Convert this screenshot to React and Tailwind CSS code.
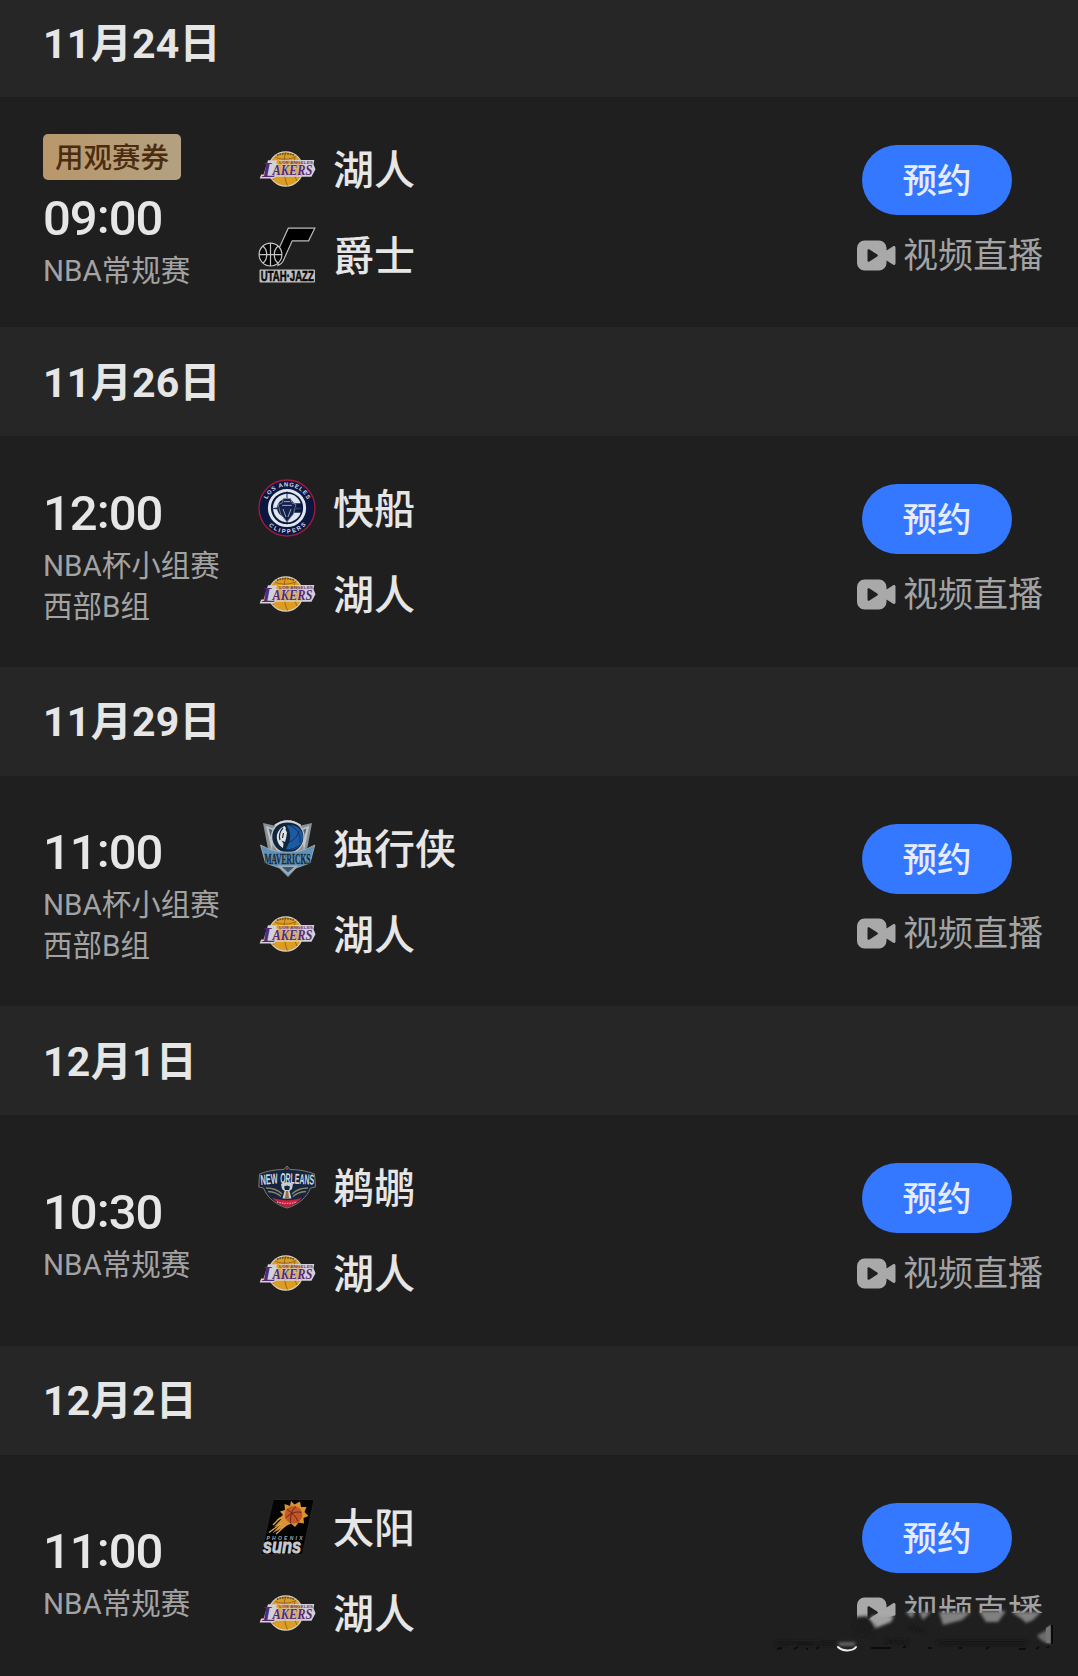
import React from 'react';

const LakersLogo = () => (
    <svg viewBox="0 0 58 58" className="w-[58px] h-[58px] shrink-0">
        <circle cx="27.7" cy="29" r="17.8" fill="#d8d2c4" />
        <circle cx="27.7" cy="29" r="16.6" fill="#dd9d22" />
        <g fill="none" stroke="#7a5320" strokeWidth="0.7">
            <path d="M27.7 12.4C25 20 25 37 29.5 45.5" />
            <path d="M17 17c5 3 16 3 21.5-1M15 40c3-9 3-12 1-20M39 41c-3-6-4-12-2-24" />
        </g>
        <path d="M19 15.5c5-2.6 12-2.6 17.5 0" fill="none" stroke="#6a4a1c" strokeWidth="1.6" strokeDasharray="1.8 0.8" />
        <path d="M10 20.3h9.5l-1.6 3.2h3V20H56.3l-.8 4.2 2 5-4 7.6H17.5l-1.6 1.6H1.6l1.6-4h2.4z" fill="#d3d0d6" />
        <path d="M20 20.8h16a17 17 0 0 1 8.3 2.7H19z" fill="#dd9d22" />
        <path d="M20 24h24.300v11.800H18z" fill="#dd9d22" fillOpacity="0.75" />
        <text x="4" y="37" fontSize="21" fontWeight="700" fontStyle="italic" fill="#542a78" textLength="14" lengthAdjust="spacingAndGlyphs" className="font-['Liberation_Serif',serif]">L</text>
        <text x="14.5" y="35" fontSize="15.5" fontWeight="700" fontStyle="italic" fill="#542a78" stroke="#d3d0d6" strokeWidth="0.9" paintOrder="stroke" textLength="40" lengthAdjust="spacingAndGlyphs" className="font-['Liberation_Serif',serif]">AKERS</text>
        <text x="21" y="23.6" fontSize="4" fontWeight="700" fill="#6d4a80" textLength="34" lengthAdjust="spacingAndGlyphs" className="font-['Liberation_Sans',sans-serif]">LOS ANGELES</text>
    </svg>
);

const JazzLogo = () => (
    <svg viewBox="0 0 58 58" className="w-[58px] h-[58px] shrink-0">
        <path d="M30.3 2.2h26.5l-6.2 12.6H34.2L25 35.2c-1 2-3 3.5-5 4.3l1-17.2z" fill="#000" stroke="#bdbdbd" strokeWidth="1.2" />
        <circle cx="12.5" cy="28.6" r="11.4" fill="#050505" stroke="#c6c6c6" strokeWidth="1.2" />
        <path d="M12.5 17.2V40M1.1 28.6h22.8M5 20.2c5 4 5 13 0 16.8M20 20.2c-5 4-5 13 0 16.8" fill="none" stroke="#c6c6c6" strokeWidth="1.2" />
        <rect x="1.5" y="43.6" width="55.5" height="12.8" rx="1" fill="#bdbdbd" />
        <text x="2.8" y="55" fontSize="14" fontWeight="700" fill="#050505" stroke="#050505" strokeWidth="0.5" textLength="53" lengthAdjust="spacingAndGlyphs" className="font-['Liberation_Sans',sans-serif]">UTAH·JAZZ</text>
    </svg>
);

const ClippersLogo = () => (
    <svg viewBox="0 0 58 58" className="w-[58px] h-[58px] shrink-0">
        <defs>
            <path id="clippers-top" d="M7.3 29a21.7 21.7 0 0 1 43.4 0" />
            <path id="clippers-bottom" d="M3.6 29a25.4 25.4 0 0 0 50.8 0" />
        </defs>
        <circle cx="29" cy="29" r="28" fill="#0c1740" stroke="#a5193f" strokeWidth="1.3" />
        <circle cx="29" cy="29" r="17.6" fill="#0c1740" stroke="#dfe6ee" strokeWidth="3" />
        <path d="M42.8 24.2a14.3 14.3 0 1 0 0 9.6h-6.6a9.2 9.2 0 1 1 0-9.6z" fill="#dfe6ee" />
        <path d="M29 12.5v33" stroke="#0c1740" strokeWidth="0.9" />
        <path d="M25.3 19.5h7.4l1.3 4.5 4 1.5-2.6 9.5L29 43l-6.4-8L20 25.5l4-1.5z" fill="#14214c" stroke="#8791ab" strokeWidth="0.8" />
        <path d="M24.2 26.4h9.6M25.8 22.6h6.4M25 30l3 8M33 30l-3 8" fill="none" stroke="#9aa6bc" strokeWidth="1" />
        <path d="M12.5 29.4l8.5-1.4v2.8zM45.5 29.4L37 28v2.8z" fill="#2a3760" />
        <g fontSize="5.8" fontWeight="700" fill="#d8dde8" className="font-['Liberation_Sans',sans-serif]">
            <text>
                <textPath href="#clippers-top" startOffset="9" textLength="50">LOS ANGELES</textPath>
            </text>
            <text>
                <textPath href="#clippers-bottom" startOffset="19" textLength="42">CLIPPERS</textPath>
            </text>
        </g>
    </svg>
);

const MavericksLogo = () => (
    <svg viewBox="0 0 58 58" className="w-[58px] h-[58px] shrink-0">
        <path d="M5 4l11 2.5C24-.5 35-.5 43 6.5L54 4l-4.5 24L30 57.5 10 30z" fill="#8c9196" />
        <path d="M8 7l8 3-2 22zM51 7l-8 3 3 22z" fill="#c2c6c9" />
        <path d="M10.5 9.5l4 1.5.5 14zM48.5 9.5l-4 1.5 0 14z" fill="#59626b" />
        <circle cx="29.8" cy="18" r="16.2" fill="#11253c" stroke="#bfc5ca" strokeWidth="1.3" />
        <path d="M17 6.5c7-5.5 18-5.5 25.5 0" fill="none" stroke="#d2d6d9" strokeWidth="2" />
        <circle cx="32.5" cy="18.5" r="12.4" fill="#1c5ba4" />
        <path d="M31 6c8 3 12 9 11 18M28 24c6-1 11-5 13-12M28 31c5 0 10-2 14-5" fill="none" stroke="#0e2d55" strokeWidth="0.9" />
        <path d="M27.5 5.5c5 5 6 13 3 19.5l-3 6-9-4c-3-8 0-17 9-21.5z" fill="#11253c" />
        <path d="M26.5 7c-5 2-8.5 7.5-7.5 13 .5 4.5 3 7 6 9l.5-4.5-2-3 3.5 1.5 1-3.5 1-6-1.5-3 .5-1.5z" fill="#dfe3e6" />
        <path d="M25 9c-3 3-4.500 8-3 12M25.5 14l-1 5" fill="none" stroke="#15283c" strokeWidth="1.2" />
        <path d="M2.5 26l9.5 4.5c11 3.5 24 3.5 35.5 0L56.8 26 52 44l-14 5-8 8.5L21.5 49 7.5 44z" fill="#5f92b8" stroke="#a9b2b9" strokeWidth="0.8" />
        <path d="M19 46.5h21.5L30 56z" fill="#a5abb0" />
        <path d="M24 48h12l-6 5.5z" fill="#315a7d" />
        <text x="6.5" y="44.500" fontSize="14" fontWeight="700" fill="#182a3b" stroke="#182a3b" strokeWidth="0.3" textLength="46" lengthAdjust="spacingAndGlyphs" className="font-['Liberation_Serif',serif]">MAVERICKS</text>
    </svg>
);

const PelicansLogo = () => (
    <svg viewBox="0 0 58 58" className="w-[58px] h-[58px] shrink-0">
        <path d="M29 8l3 3.5c9 0 17 1.5 24.5 4.5L57.5 29l-5 1C49 39 41 46.5 29 50 17 46.5 9 39 5.5 30L.8 29 1.500 16C9 13 17 11.500 26 11.5z" fill="#132540" stroke="#8d8468" strokeWidth="0.9" />
        <path d="M29 8.800l1.5 2.7h-3z" fill="#a54042" />
        <path d="M8 30c7 0 12 2 16 6M10 33.5c6 .5 10 2 13 5M50 30c-7 0-12 2-16 6M48 33.5c-6 .5-10 2-13 5" fill="none" stroke="#918461" strokeWidth="1.4" />
        <path d="M14 39.5c9 3.5 21 3.5 30 0-4 5-9 8-15 9.7-6-1.7-11-4.7-15-9.7z" fill="#c4213c" />
        <path d="M19 43.8c6 2.2 14 2.2 20 0" fill="none" stroke="#e3a4ad" strokeWidth="1.3" strokeDasharray="1.5 1" />
        <path d="M23 26c3-2.5 9-2.5 12 0l-1 5-2.5 2 2 7.5h-9l2-7.5-2.500-2z" fill="#c9cdd0" />
        <path d="M26 28.5l3-1 3 1-1 3.5h-4z" fill="#15243c" />
        <path d="M28 33h2l1 7h-4z" fill="#9c6f3e" />
        <g fontSize="14.5" fontWeight="700" fill="#d5d9dc" className="font-['Liberation_Sans',sans-serif]">
            <text x="3" y="27" transform="rotate(-5 3 26)" textLength="17" lengthAdjust="spacingAndGlyphs">NEW</text>
            <text x="22" y="25" transform="rotate(3 22 24)" textLength="34" lengthAdjust="spacingAndGlyphs">ORLEANS</text>
        </g>
    </svg>
);

const SunsLogo = () => (
    <svg viewBox="0 0 58 58" className="w-[58px] h-[58px] shrink-0">
        <path d="M15.3 1.5H56L44.3 56.5H3z" fill="#040404" stroke="#303030" strokeWidth="0.6" />
        <path d="M33 3l3.5 3.5L42 3.5l1 5.5 5.5 0-2 5 4 4-5 2 .5 5.5-5.5-1L37 29l-4-3.5L14.5 35l8-8.5L16 29l7.5-8L18 22.5l7-5.5-3-3.5 5-1.5-.5-6 5.5 2z" fill="#d99335" />
        <path d="M24 25L11 34.5M22 20l-7 7M28 27l-10 9" stroke="#e2a546" strokeWidth="1.3" />
        <circle cx="35.5" cy="16.7" r="8.8" fill="#c55626" />
        <path d="M27.5 20c5-5 11-7 16-5.5M29 11.5c4 2 9 7 11 12M38 8.5c-4 3-6 9-5.5 16.5" fill="none" stroke="#5a2415" strokeWidth="0.9" />
        <text x="8.5" y="41.5" fontSize="5" fontWeight="700" fontStyle="italic" fill="#aaa" textLength="36" className="font-['Liberation_Sans',sans-serif]">PHOENIX</text>
        <text x="4.8" y="54.5" fontSize="19.5" fontWeight="700" fontStyle="italic" fill="#c9c9c9" stroke="#c9c9c9" strokeWidth="0.8" textLength="38.5" lengthAdjust="spacingAndGlyphs" className="font-['Liberation_Sans',sans-serif]">suns</text>
    </svg>
);

const teams = {
    lakers: { name: '湖人', Logo: LakersLogo },
    jazz: { name: '爵士', Logo: JazzLogo },
    clippers: { name: '快船', Logo: ClippersLogo },
    mavericks: { name: '独行侠', Logo: MavericksLogo },
    pelicans: { name: '鹈鹕', Logo: PelicansLogo },
    suns: { name: '太阳', Logo: SunsLogo },
};

const schedule = [
    { date: '11月24日', time: '09:00', info: ['NBA常规赛'], ticket: true, teams: ['lakers', 'jazz'] },
    { date: '11月26日', time: '12:00', info: ['NBA杯小组赛', '西部B组'], teams: ['clippers', 'lakers'] },
    { date: '11月29日', time: '11:00', info: ['NBA杯小组赛', '西部B组'], teams: ['mavericks', 'lakers'] },
    { date: '12月1日', time: '10:30', info: ['NBA常规赛'], teams: ['pelicans', 'lakers'] },
    { date: '12月2日', time: '11:00', info: ['NBA常规赛'], teams: ['suns', 'lakers'], smudged: true },
];

const VideoIcon = () => (
    <svg viewBox="0 0 39 31" className="w-[39px] h-[31px] shrink-0">
        <path
            fillRule="evenodd"
            fill="#a9a9a9"
            d="M7.5.5H22a7.5 7.5 0 0 1 7.5 7.5v2.6l6.3-4.2c1.3-.9 2.7-.2 2.7 1.4v15.4c0 1.6-1.4 2.3-2.7 1.4l-6.3-4.2V23a7.5 7.5 0 0 1-7.5 7.5H7.5A7.5 7.5 0 0 1 0 23V8A7.5 7.5 0 0 1 7.5.5zM10.500 10.600v9.800c0 1.200 1 1.700 2 1.100l7.700-4.900c.9-.6.9-1.600 0-2.200l-7.700-4.900c-1-.6-2-.1-2 1.100z"
        />
    </svg>
);

// Dark smear with a ragged top edge lying over the last live label
const Smudge = () => (
    <svg viewBox="0 0 288 48" className="absolute left-[767px] top-[152px] w-[288px] h-[48px]">
        <defs>
            <filter id="smear" x="-5%" y="-20%" width="110%" height="140%">
                <feGaussianBlur stdDeviation="1.6" />
            </filter>
        </defs>
        <path d="M86 13l22 6V15l27-9h150V40H86z" fill="#1f1f1f" />
        <g filter="url(#smear)">
            <path d="M88 10l12-1 8 9-2 12-20-2z" fill="#1f1f1f" />
            <path d="M138 5h10l-3 6zM152 5h12l-8 8zM172 5h32l-9 8-19 5zM212 4h27l-8 11h-12zM244 5h30l-8 8-7 3-4-4z" fill="#808080" />
            <path d="M104 9h23l-3 6-15 6z" fill="#a0a0a0" />
            <path d="M118 34l24 2M142 20l16 4M8 36l60 1M170 36h90" stroke="#191919" strokeWidth="4" />
            <path d="M72 37h16" stroke="#777" strokeWidth="3" />
        </g>
        <path d="M284 18v18.5c-6 0-11-3-14-8.500 6-2 10-5 14-10z" fill="#6c6c6c" filter="url(#smear)" />
        <path d="M279 21l4.500-3v18.500l-4.500-1z" fill="#747474" />
        <path d="M285 18v19" stroke="#000" strokeWidth="1.5" />
        <path d="M10 42l5-1m12 1l4-2m8 2h2m8 0l3-2m52 1h20m12 0l3-2m22 2h4m27 0h3m24 1l3-2m30 2h7m10 0l3-2m8 1l2-2" stroke="#0c0c0c" strokeWidth="1.8" />
        <path d="M71 40c4 4.500 15 4.500 18 0" fill="none" stroke="#ececec" strokeWidth="2" strokeLinecap="round" />
    </svg>
);

const MatchRow = ({ match }) => {
    const [hours, minutes] = match.time.split(':');

    return (
        <div className="relative flex h-[230.4px] bg-[#1f1f1f]">
            {/* Time and competition */}
            <div className={`w-[258px] pl-[43px] shrink-0 flex flex-col justify-center whitespace-nowrap ${match.ticket ? 'pt-[1px]' : 'pt-[9px]'}`}>
                {match.ticket && (
                    <div className="w-[138px] h-[46px] mb-[10px] pt-[6px] rounded-[5px] flex items-center justify-center bg-linear-to-r from-[#b9976a] to-[#b3a181] text-[28.5px] leading-none font-medium text-[#4b2c10]">
                        用观赛券
                    </div>
                )}
                <div className="h-[58px] text-[49px] leading-[58px] font-medium tracking-[-1px] text-[#e6e6e6]">
                    {hours}
                    <span className="relative -top-[2px]">:</span>
                    {minutes}
                </div>
                <div className="mt-[3px] text-[29.5px] leading-[41px] text-[#a3a3a3]">
                    {match.info.map((line) => (
                        <div key={line}>{line}</div>
                    ))}
                </div>
            </div>

            {/* Teams */}
            <div className="flex-1 pt-[43px] flex flex-col gap-[28px]">
                {match.teams.map((id) => {
                    const { name, Logo } = teams[id];
                    return (
                        <div key={id} className="h-[58px] flex items-center gap-[17px]">
                            <Logo />
                            <span className="pt-[4px] text-[41px] leading-[58px] font-medium text-[#e6e6e6]">{name}</span>
                        </div>
                    );
                })}
            </div>

            {/* Actions */}
            <div className="w-[221px] pt-[48px] shrink-0">
                <button className="ml-[5px] w-[150px] h-[70px] pt-[2px] rounded-full bg-[#3478ff] text-[34.5px] leading-[68px] font-medium text-[#e6ecff] block">
                    预约
                </button>
                <div className="mt-[19px] h-[42px] flex items-center gap-[7px] whitespace-nowrap text-[35px] leading-[42px] text-[#a3a3a3]">
                    <VideoIcon />
                    <span className="pt-[3px]">视频直播</span>
                </div>
            </div>
            {match.smudged && <Smudge />}
        </div>
    );
};

const App = () => {
    return (
        <div className="w-[1078px] h-[1676px] overflow-hidden bg-[#1f1f1f] font-[Roboto,'Noto_Sans_CJK_SC',sans-serif]">
            <div className="-mt-[12px]">
                {schedule.map((match) => (
                    <section key={match.date}>
                        <h2 className="h-[109px] pl-[43px] pt-[3px] flex items-center bg-[#262626] text-[41px] leading-none font-bold tracking-[0.3px] text-[#e6e6e6]">
                            {match.date}
                        </h2>
                        <MatchRow match={match} />
                    </section>
                ))}
            </div>
        </div>
    );
};

export default App;
